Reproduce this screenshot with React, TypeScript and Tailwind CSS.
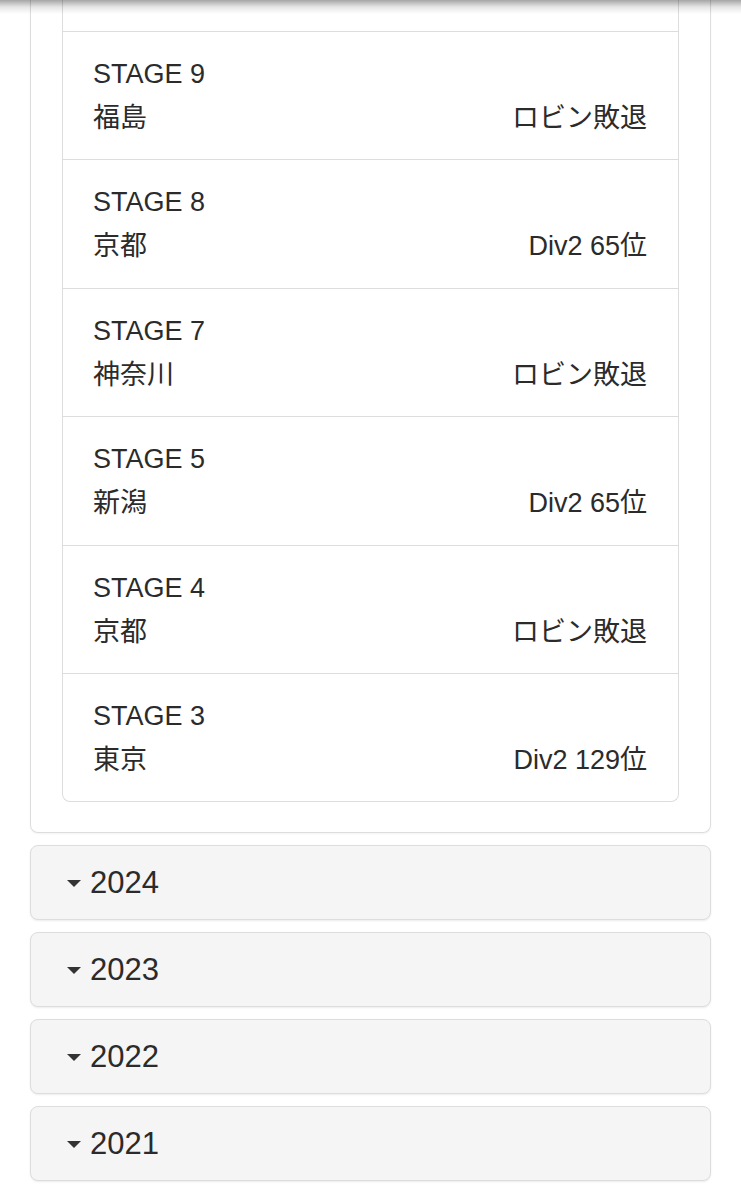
import React from "react";

interface Stage {
  name: string;
  place: string;
  result: string;
}

const stages: Stage[] = [
  { name: "STAGE 9", place: "福島", result: "ロビン敗退" },
  { name: "STAGE 8", place: "京都", result: "Div2 65位" },
  { name: "STAGE 7", place: "神奈川", result: "ロビン敗退" },
  { name: "STAGE 5", place: "新潟", result: "Div2 65位" },
  { name: "STAGE 4", place: "京都", result: "ロビン敗退" },
  { name: "STAGE 3", place: "東京", result: "Div2 129位" },
];

const years = ["2024", "2023", "2022", "2021"];

const font = "font-['Liberation_Sans','Noto_Sans_CJK_JP',sans-serif]";

const App: React.FC = () => {
  return (
    <div className={`relative min-h-[1200px] overflow-hidden bg-white px-[30px] text-[#2b2b2b] ${font}`}>
      {/* header shadow from the bar above */}
      <div className="absolute left-0 right-0 top-0 h-[14px] bg-linear-to-b from-black/35 via-black/10 to-transparent" />

      <div className="-mt-[10px] rounded-b-[8px] border border-t-0 border-[#ddd] px-[31px] pb-[30px] shadow-[0_1px_2px_rgba(0,0,0,0.05)]">
        <div className="rounded-b-[8px] border border-t-0 border-[#ddd]">
          {/* tail of the previous item */}
          <div className="h-[42px] border-b border-[#ddd]" />
          {stages.map((s, i) => (
            <div
              key={s.name}
              className={`pt-[20px] pb-[19.4px] pl-[30px] pr-[31px] text-[27px] leading-[44px] ${
                i < stages.length - 1 ? "border-b border-[#ddd]" : ""
              }`}
            >
              <div>{s.name}</div>
              <div className="flex justify-between">
                <span>{s.place}</span>
                <span>{s.result}</span>
              </div>
            </div>
          ))}
        </div>
      </div>

      <div className="mt-[12px] flex flex-col gap-[12px]">
        {years.map((y) => (
          <div
            key={y}
            className="flex h-[75px] items-center rounded-[8px] border border-[#ddd] bg-[#f5f5f5] pl-[36px] shadow-[0_1px_2px_rgba(0,0,0,0.08)]"
          >
            <span className="mr-[9px] mt-[2px] h-0 w-0 border-x-[7px] border-t-[7px] border-x-transparent border-t-[#333]" />
            <span className="text-[31px] leading-none">{y}</span>
          </div>
        ))}
      </div>
    </div>
  );
};

export default App;
